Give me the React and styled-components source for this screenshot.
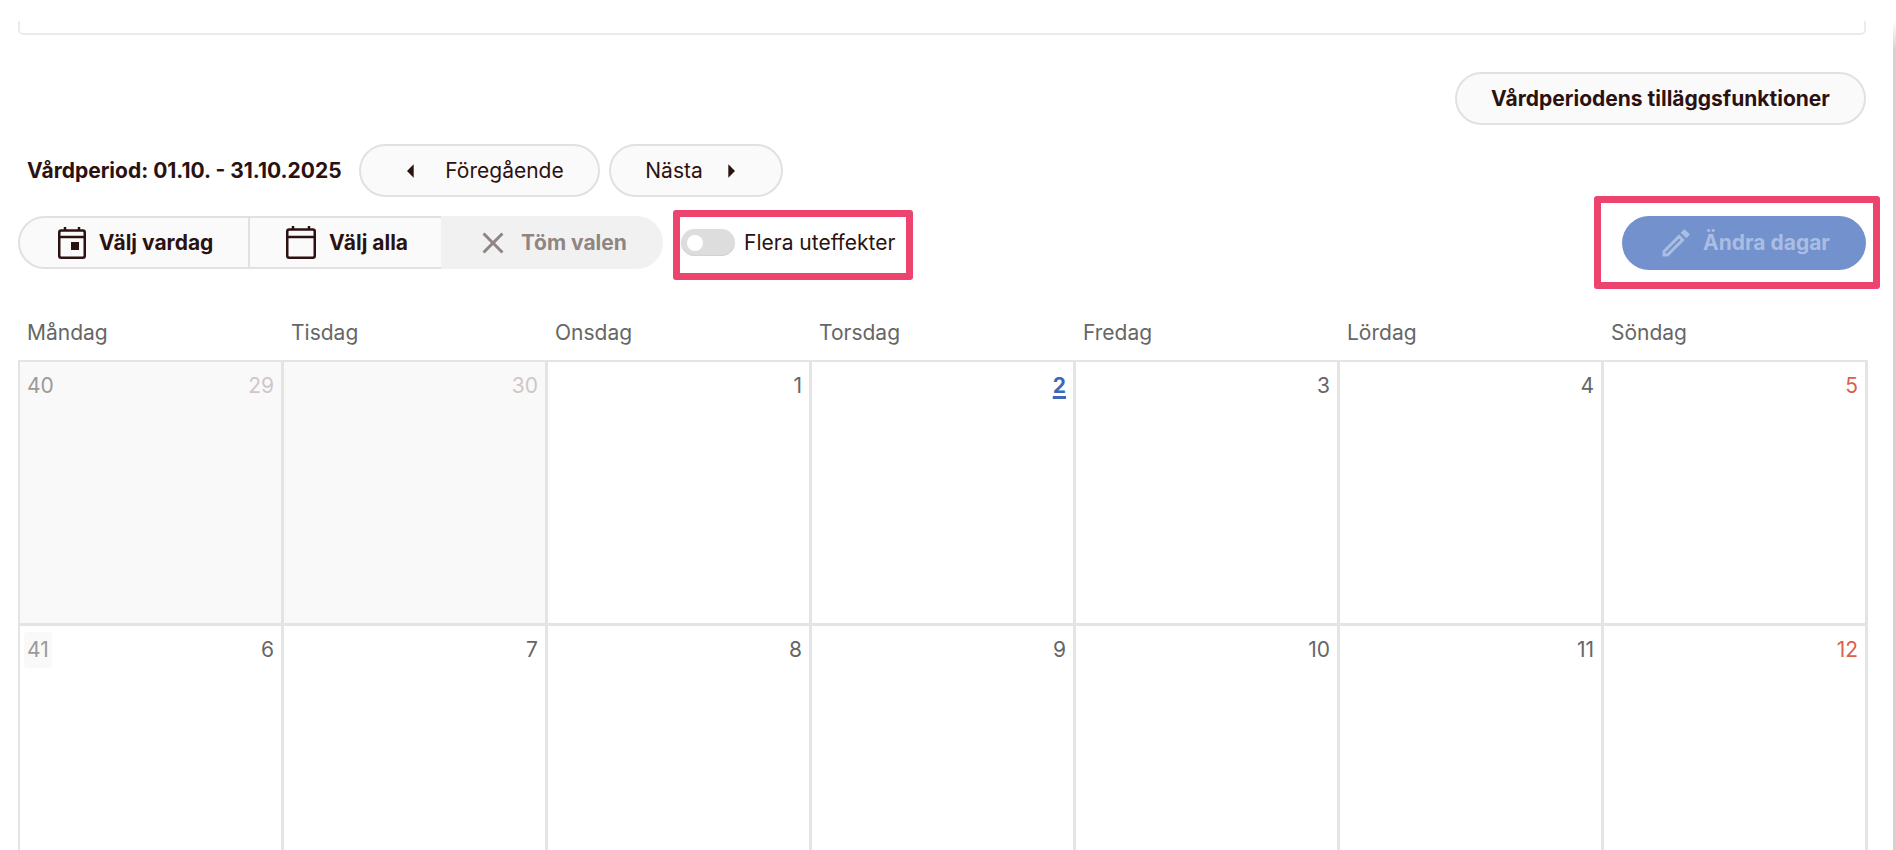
import React from "react";
import styled, { createGlobalStyle } from "styled-components";

const WEEKDAYS = ["Måndag", "Tisdag", "Onsdag", "Torsdag", "Fredag", "Lördag", "Söndag"];

const ROWS = [
  {
    week: 40,
    days: [
      { n: 29, muted: true },
      { n: 30, muted: true },
      { n: 1 },
      { n: 2, today: true },
      { n: 3 },
      { n: 4 },
      { n: 5, sunday: true },
    ],
  },
  {
    week: 41,
    days: [
      { n: 6 },
      { n: 7 },
      { n: 8 },
      { n: 9 },
      { n: 10 },
      { n: 11 },
      { n: 12, sunday: true },
    ],
  },
];

const ICONS = {
  close:
    "M19 6.41L17.59 5 12 10.59 6.41 5 5 6.41 10.59 12 5 17.59 6.41 19 12 13.41 17.59 19 19 17.59 13.41 12 19 6.41z",
  pencil:
    "M14.06 9L15 9.94 5.92 19H5v-.92L14.06 9m3.6-6c-.25 0-.51.1-.7.29l-1.83 1.83 3.75 3.75 1.83-1.83c.39-.39.39-1.04 0-1.41l-2.34-2.34c-.2-.2-.45-.29-.71-.29m-3.6 3.19L3 17.25V21h3.75L17.81 9.94l-3.75-3.75z",
  left: "M14 7l-5 5 5 5V7z",
  right: "M10 17l5-5-5-5v10z",
};

function Icon({ name, size = 32 }) {
  return (
    <svg width={size} height={size} viewBox="0 0 24 24" fill="currentColor" aria-hidden="true">
      <path d={ICONS[name]} />
    </svg>
  );
}

function CalendarIcon({ width, height, band, ears, day }) {
  return (
    <svg width={width} height={height} viewBox={`0 0 ${width} ${height}`} fill="none" aria-hidden="true">
      <rect x="1.25" y="3.5" width={width - 2.5} height={height - 4.75} rx="2" stroke="currentColor" strokeWidth="2.5" />
      <path d={`M1 ${band}H${width - 1}`} stroke="currentColor" strokeWidth="2.5" />
      <path d={`M${ears[0]} 0V4M${ears[1]} 0V4`} stroke="currentColor" strokeWidth="2.5" />
      {day && <rect x="13" y="15" width="8" height="8" fill="currentColor" />}
    </svg>
  );
}

function App() {
  return (
    <Page>
      <GlobalStyle />
      <TopCard />
      <ExtraRow>
        <ExtraButton>Vårdperiodens tilläggsfunktioner</ExtraButton>
      </ExtraRow>
      <PeriodRow>
        <PeriodLabel>Vårdperiod: 01.10. - 31.10.2025</PeriodLabel>
        <NavButton $width={241} $gap={18}>
          <Icon name="left" />
          Föregående
        </NavButton>
        <NavButton $width={174} $gap={12}>
          Nästa
          <Icon name="right" />
        </NavButton>
      </PeriodRow>
      <ToolRow>
        <SelectGroup>
          <SelectButton $width={230}>
            <CalendarIcon width={28} height={32} band={10} ears={[7, 21]} day />
            Välj vardag
          </SelectButton>
          <SelectButton $width={193} $divider>
            <CalendarIcon width={30} height={33} band={11} ears={[7, 23]} />
            Välj alla
          </SelectButton>
          <ClearButton>
            <Icon name="close" size={36} />
            Töm valen
          </ClearButton>
        </SelectGroup>
        <ToggleHighlight>
          <ToggleTrack>
            <ToggleKnob />
          </ToggleTrack>
          <ToggleLabel>Flera uteffekter</ToggleLabel>
        </ToggleHighlight>
        <EditHighlight>
          <EditButton>
            <Icon name="pencil" size={36} />
            Ändra dagar
          </EditButton>
        </EditHighlight>
      </ToolRow>
      <WeekdayRow>
        {WEEKDAYS.map((day) => (
          <Weekday key={day}>{day}</Weekday>
        ))}
      </WeekdayRow>
      <Calendar>
        {ROWS.map((row) =>
          row.days.map((day, i) => (
            <DayCell key={day.n} $muted={day.muted}>
              {i === 0 ? <WeekNumber $muted={day.muted}>{row.week}</WeekNumber> : <span />}
              <DayNumber $muted={day.muted} $today={day.today} $sunday={day.sunday}>
                {day.n}
              </DayNumber>
            </DayCell>
          ))
        )}
      </Calendar>
    </Page>
  );
}

const GlobalStyle = createGlobalStyle`
  html, body {
    margin: 0;
    height: 850px;
    overflow: hidden;
    background: #fff;
  }
  body {
    font-family: "Inter", "Liberation Sans", sans-serif;
    color: #2b1210;
  }
`;

const Page = styled.div`
  width: 1896px;
  height: 850px;
  box-sizing: border-box;
  padding: 0 30px 0 18px;
  overflow: hidden;
  background: linear-gradient(to bottom, transparent 20px, #d2d2d2 50px) right top / 3px 100% no-repeat;
`;

const TopCard = styled.div`
  height: 35px;
  box-sizing: border-box;
  border: 2px solid #ebebeb;
  border-top: 0;
  border-radius: 0 0 5px 5px;
  mask-image: linear-gradient(to bottom, transparent 20px, #000 22px);
`;

const ExtraRow = styled.div`
  display: flex;
  justify-content: flex-end;
  margin-top: 37px;
`;

const pill = `
  display: inline-flex;
  align-items: center;
  justify-content: center;
  box-sizing: border-box;
  height: 53px;
  border: 2px solid #e2e0e0;
  border-radius: 27px;
  background: #fafafa;
  color: #2b1210;
  font-family: inherit;
  font-size: 21px;
  padding: 0;
`;

const ExtraButton = styled.button`
  ${pill}
  width: 411px;
  font-weight: 700;
`;

const PeriodRow = styled.div`
  display: flex;
  align-items: center;
  margin-top: 19px;
  padding-left: 9px;
`;

const PeriodLabel = styled.div`
  width: 332px;
  font-size: 21px;
  font-weight: 700;
`;

const NavButton = styled.button`
  ${pill}
  width: ${(p) => p.$width}px;
  gap: ${(p) => p.$gap}px;
  margin-right: 9px;
  font-weight: 400;
`;

const ToolRow = styled.div`
  display: flex;
  align-items: center;
  height: 93px;
  margin-top: -1px;
`;

const SelectGroup = styled.div`
  display: flex;
  height: 53px;
`;

const SelectButton = styled.button`
  ${pill}
  width: ${(p) => p.$width}px;
  gap: 13px;
  padding-left: 3px;
  font-weight: 700;
  border-right: 0;
  border-radius: 27px 0 0 27px;
  ${(p) => p.$divider && "border-radius: 0; border-left: 2px solid #e2e0e0;"}
`;

const ClearButton = styled.button`
  ${pill}
  width: 222px;
  gap: 10px;
  padding-right: 2px;
  font-weight: 700;
  border: 0;
  border-radius: 0 27px 27px 0;
  background: #f1f1f1;
  color: #8f8583;
`;

const highlight = `
  display: flex;
  align-items: center;
  box-sizing: border-box;
  border: 7px solid #ec446f;
  border-radius: 3px;
`;

const ToggleHighlight = styled.div`
  ${highlight}
  width: 240px;
  height: 70px;
  margin-left: 10px;
  margin-top: 5px;
  padding: 0 0 5px 1px;
  gap: 9px;
`;

const ToggleTrack = styled.div`
  display: flex;
  align-items: center;
  width: 54px;
  height: 27px;
  box-sizing: border-box;
  padding-left: 6px;
  border-radius: 14px;
  background: #dddddd;
  box-shadow: inset 0 -1px 1px #d2d2d2;
`;

const ToggleKnob = styled.div`
  width: 16px;
  height: 16px;
  border-radius: 50%;
  background: #fff;
`;

const ToggleLabel = styled.span`
  font-size: 21px;
`;

const EditHighlight = styled.div`
  ${highlight}
  justify-content: flex-end;
  width: 286px;
  height: 93px;
  margin-left: auto;
  margin-right: -14px;
  padding-right: 7px;
`;

const EditButton = styled.button`
  ${pill}
  width: 244px;
  height: 54px;
  gap: 9px;
  border: 0;
  background: #7391cd;
  color: #aabde2;
  font-weight: 700;
`;

const WeekdayRow = styled.div`
  display: grid;
  grid-template-columns: repeat(7, 264px);
  margin-top: 32px;
  height: 39px;
`;

const Weekday = styled.div`
  padding-left: 9px;
  font-size: 21px;
  line-height: 24px;
  color: #666;
`;

const Calendar = styled.div`
  display: grid;
  grid-template-columns: repeat(7, 264px);
  grid-auto-rows: 264px;
  width: 1850px;
  box-sizing: border-box;
  border-top: 2px solid #e4e4e4;
  border-left: 2px solid #e4e4e4;
`;

const DayCell = styled.div`
  display: flex;
  justify-content: space-between;
  align-items: flex-start;
  box-sizing: border-box;
  padding: 6px 7px 0 7px;
  border-right: 3px solid #e4e4e4;
  border-bottom: 3px solid #e4e4e4;
  background: ${(p) => (p.$muted ? "#f9f9f9" : "#fff")};
`;

const WeekNumber = styled.span`
  display: block;
  padding: 0 3px;
  margin-left: -3px;
  line-height: 36px;
  height: 36px;
  font-size: 21px;
  border-radius: 4px;
  color: #9a9a9a;
  background: ${(p) => (p.$muted ? "transparent" : "#f9f9f9")};
`;

const DayNumber = styled.span`
  font-size: 21px;
  line-height: 36px;
  color: ${(p) =>
    p.$muted ? "#cdc8c8" : p.$today ? "#3f66b8" : p.$sunday ? "#dc5f50" : "#666"};
  font-weight: ${(p) => (p.$today ? 700 : 400)};
  text-decoration: ${(p) => (p.$today ? "underline" : "none")};
  text-decoration-thickness: 3px;
  text-underline-offset: 3px;
`;

export default App;
